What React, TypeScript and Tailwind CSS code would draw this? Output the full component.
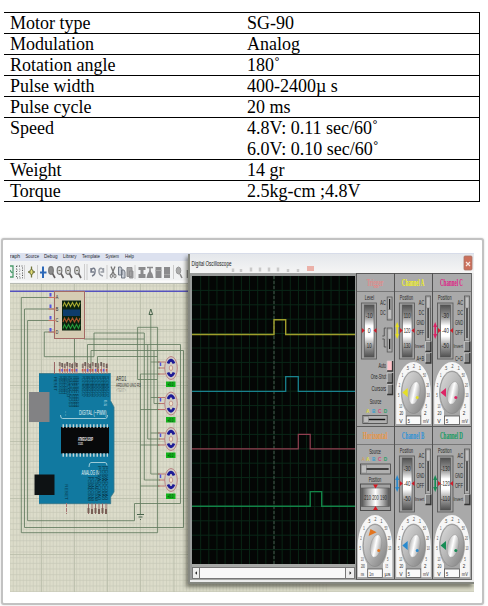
import React from "react";

const rows: [string, string[]][] = [
  ["Motor type", ["SG-90"]],
  ["Modulation", ["Analog"]],
  ["Rotation angle", ["180˚"]],
  ["Pulse width", ["400-2400µ s"]],
  ["Pulse cycle", ["20 ms"]],
  ["Speed", ["4.8V: 0.11 sec/60˚", "6.0V: 0.10 sec/60˚"]],
  ["Weight", ["14 gr"]],
  ["Torque", ["2.5kg-cm ;4.8V"]],
];

type TProps = {
  x: number;
  y: number;
  w: number;
  s?: number;
  fill?: string;
  anchor?: "start" | "middle" | "end";
  weight?: number;
  rotate?: number;
  className?: string;
  children: string;
};

/* Condensed label: glyphs are squeezed to the width w. */
function T({ x, y, w, s = 7, fill = "#262626", anchor = "start", weight = 400, rotate, className, children }: TProps) {
  return (
    <text
      x={x}
      y={y}
      fontSize={s}
      fill={fill}
      textAnchor={anchor}
      fontWeight={weight}
      textLength={w}
      lengthAdjust="spacingAndGlyphs"
      className={className}
      transform={rotate ? `rotate(${rotate} ${x} ${y})` : undefined}
    >
      {children}
    </text>
  );
}

function SpecTable() {
  return (
    <div className="ml-1 mt-3 w-[476px] border-r border-t border-black text-[18px] leading-[20px] text-black [font-family:'Liberation_Serif',serif]">
      {rows.map(([name, values]) => (
        <div key={name} className="flex border-b border-black pl-[6px]">
          <div className="w-[237px]">{name}</div>
          <div className={values.length > 1 ? "h-[41px] leading-[20.5px]" : "h-5"}>
            {values.map((v) => (
              <div key={v}>{v}</div>
            ))}
          </div>
        </div>
      ))}
    </div>
  );
}

function MenuBar() {
  const items: [string, number, number][] = [
    ["raph", 10, 10],
    ["Source", 25.5, 13.5],
    ["Debug", 44, 13.5],
    ["Library", 63, 13.5],
    ["Template", 82, 18],
    ["System", 105.5, 13.5],
    ["Help", 125, 9],
  ];
  return (
    <svg className="block h-2 w-full bg-[#dce1ef]" viewBox="10 253 464 8">
      {items.map(([t, x, w]) => (
        <T key={t} x={x} y={257.5} w={w} s={6} fill="#22252e">{t}</T>
      ))}
    </svg>
  );
}

function ToolBar() {
  const gray = "#8b8b8d";
  return (
    <svg className="block h-[23px] w-full bg-[#f1f2f3]" viewBox="10 261 464 23" fill="none">
      <path d="M10 281.500H474" stroke="#fbfbfb" strokeWidth="2" />
      <path d="M10 283.500H474" stroke="#b8bbb3" />
      <path d="M10 266h3v11h-3M10 270l2 3" stroke="#4c9a6c" strokeWidth="1.300" />
      <rect x="16.500" y="266" width="6" height="12" stroke="#555" strokeDasharray="1 1.500" />
      <path d="M19.500 266v12M17 270h6M17 274h6" stroke="#777" strokeWidth=".6" strokeDasharray="1 1.500" />
      <path d="M24.500 265v14M37.500 265v14M84.500 264v16M87 264v16M107 265v14M135 265v14M173.500 265v14" stroke="#ccc" />
      <path d="M31.500 266.500v11M28 272h7" stroke="#72753a" strokeWidth="1.300" />
      <ellipse cx="31.500" cy="272" rx="1.700" ry="2.600" fill="#e1dc75" stroke="#6d7036" />
      <path d="M43 266.500v11.500M40 272.500h6.500" stroke="#2c68b8" strokeWidth="2" />
      {[51, 59.5, 68, 77].map((x, i) => (
        <g key={x}>
          <ellipse cx={x} cy="270.500" rx="2.300" ry="3.800" stroke="#777" strokeWidth="1.200" fill={i === 0 ? "#8b8b8b" : "#d9d9d9"} />
          <path d={`M${x + 1.500} 273.500l2.500 4.500`} stroke="#646060" strokeWidth="1.600" />
          {i > 0 && <path d={`M${x - 1} 270.500h2`} stroke="#776" strokeWidth="1" />}
        </g>
      ))}
      <path d="M91 268v4h3M91 272c1-6 5-4 4 0q0 3-3 4" stroke="#777d8b" strokeWidth="1.400" />
      <path d="M103.500 268v4h-3M103.500 272c-1-6-5-4-4.500 0q0 3 4 4" stroke="#999da5" strokeWidth="1.400" />
      {/* cut, copy, paste */}
      <path d="M111 266.500l3.500 8.500M115 266.500l-3.500 8.500" stroke="#777" strokeWidth="1.300" />
      <ellipse cx="111.300" cy="276" rx="1.100" ry="1.800" stroke="#777" />
      <ellipse cx="114.900" cy="276" rx="1.100" ry="1.800" stroke="#777" />
      <path d="M118.500 267h2.500l1 2v6h-3.500zM121.500 270h2.500l1 2v6h-3.500z" fill="#c8cdd5" stroke="#69717c" strokeWidth=".9" />
      <path d="M127 267.500h5v9h-5zM129.500 271h3.500v7h-3.500z" fill="#a2a2a3" stroke={gray} strokeWidth=".9" />
      <path d="M138.500 267h7v3h-2v4h2v4h-7v-4h2v-4h-2z" fill={gray} />
      <path d="M147 267.500h6M150 268v6" stroke={gray} strokeWidth="1.500" />
      <path d="M146.500 278l1-4 2.500-4 2.500 4 1 4z" fill={gray} />
      <path d="M155.500 267h6v11h-6zM164 267h6v11h-6z" fill={gray} />
      <path d="M155.500 270.500h6M164 274.500h6" stroke="#a5a5a5" />
      <ellipse cx="178.500" cy="270.500" rx="2.300" ry="3.500" fill="#aaa" stroke="#999" />
      <path d="M180 274l2 4M187.500 270v8" stroke="#8b8b8b" strokeWidth="1.600" />
    </svg>
  );
}

function Motor({ y, from }: { y: number; from: number }) {
  return (
    <g>
      <path d={`M150.800 ${y - 6}h9M${from} ${y}H160M140.400 ${y + 6}h19`} stroke="#5f785c" strokeWidth=".8" />
      <path d={`M158 ${y - 6}h7M159 ${y}h7M158 ${y + 6}h7`} stroke="#b45b5b" strokeWidth=".8" />
      <path d={`M160.500 ${y - 5.5}v3.500`} stroke="#5351d8" strokeWidth="1.500" />
      <ellipse cx="171" cy={y} rx="6.300" ry="11.500" fill="#d0cdc4" stroke="#b8797c" strokeWidth=".9" />
      <path d={`M168 ${y - 4.500}q3-6.500 6 0M168 ${y + 4.500}q3 6.500 6 0`} stroke="#1d1a96" strokeWidth="2.800" fill="none" />
      <ellipse cx="171" cy={y} rx="1.700" ry="2.500" fill="#efe4cb" stroke="#ba817b" strokeWidth=".7" />
      <rect x="166" y={y + 13.500} width="9.500" height="5.5" fill="#12b31c" />
      <T x={167.500} y={y + 18} w={6} s={5} fill="#0f3a10">+0.0</T>
    </g>
  );
}

function Schematic() {
  const minorV = Array.from({ length: 96 }, (_, i) => 10 + i * 3.330);
  const minorH = Array.from({ length: 57 }, (_, i) => 286 + i * 5.660);
  const pinsTop = [60, 62.500, 65, 67.500, 70, 72.500, 75, 77, 83, 85.500, 88, 90.500, 93, 96, 98.500, 101.500, 104, 107];
  const pinsBottom = [88.500, 92, 95.500, 99, 102.500, 106];
  return (
    <svg className="block h-[308px] w-full bg-[#dcdcca]" viewBox="10 284 464 308" fill="none">
      <path d={minorV.map((x) => `M${x} 284V592`).join("")} stroke="#c9cbb9" strokeWidth=".65" />
      <path d={minorH.map((y) => `M10 ${y}H474`).join("")} stroke="#c7c9b8" strokeWidth=".7" />
      <path d="M41.500 284V592M74.500 284V592M107.500 284V592M140.500 284V592M174 284V592M10 329.500H474M10 385.500H474M10 441.500H474M10 498.500H474M10 554.500H474" stroke="#b9bcaa" strokeWidth=".8" />
      <path d="M10 291.300H190" stroke="#5552be" strokeWidth="1.500" />

      <g stroke="#627b5f" strokeWidth=".85">
        <path d="M54 297.500H21.300V532.700H157.600V379.500H137.600V327.300H157.600V379.500" />
        <path d="M54 309H24.500V527.500H183.500V350.500H91V372" />
        <path d="M54 320.500H27.600V520.700H134.500V503.500H180.500V344.500H87.500V372" />
        <path d="M54 332H44.300V356.700H94V333H144.300V480" />
        <path d="M84 339H144M74.500 339V372M97.500 372V356.500H157.500M150.800 315V474M140.400 515V374M147.700 344.500V439M154 350.500V403.500" />
      </g>
      <path d="M150.800 309l-1.800 5.500h3.600zM137 514.500h7M138.500 517h4M140 519.500h1" stroke="#47634a" />

      <rect x="54.500" y="291.500" width="30" height="47" fill="#d5ccb3" stroke="#a46965" />
      <path d="M48.500 297.500h7M48.500 309h7M48.500 320.500h7M48.500 332h7" stroke="#c67066" />
      {[293, 304.500, 316, 328].map((y, i) => (
        <g key={y}>
          <rect x="49.500" y={y} width="2" height="3.500" fill="#5553e0" />
          <T x={55.800} y={y + 6} w={2.600} s={5}>{"ABCD"[i]}</T>
        </g>
      ))}
      <rect x="62" y="300.500" width="19" height="30" fill="#0b2310" />
      <rect x="63" y="309.500" width="17" height="6.500" fill="#0d3c6c" />
      {[[306.500, "#a9aa31"], [322, "#a8542b"], [328.500, "#259a3a"]].map(([y, c]) => (
        <path key={c} d={`M63 ${y}l1.500-4 2 4 2-4 2 4 2-4 2 4 2-4 2 4 1.500-4`} stroke={c as string} strokeWidth="1.100" />
      ))}

      <path d="M39 373.500H110.700V401l3.300 6V492l-3.300 5v6.700H39z" fill="#1179a0" />
      <path d="M39 373.500H110.700M110.700 401l3.300 6V492l-3.300 5v6.700H39" stroke="#387585" strokeWidth=".8" />
      <rect x="29" y="392" width="20.500" height="30" fill="#828284" />
      <rect x="34.500" y="474.500" width="20" height="20.500" fill="#0e1214" />
      <path d="M54.500 362v12" stroke="#9b6565" />
      <path d={pinsTop.map((x) => `M${x} 363V374`).join("")} stroke="#a87272" strokeWidth=".8" />
      {pinsTop.map((x, i) => (
        <g key={x}>
          <rect x={x - 1.200} y={362 + (i % 3)} width="1.800" height="4" fill={i % 2 ? "#6f5f59" : "#8a7a70"} />
          <rect x={x - 1.200} y="369" width="1.500" height="2.500" fill={i % 3 === 1 ? "#6156d6" : "#c4594c"} />
          <T x={x - 1} y={376} w={i > 3 && i < 8 ? 31 : i < 3 ? 18 : 21} s={3.600} fill="#06303f" rotate={90}>{i < 8 ? "PB5/SCK/D13" : "PD7/AIN1/D7"}</T>
        </g>
      ))}
      <T x={53.500} y={377} w={14} s={4} fill="#06303f" rotate={90}>RESET</T>
      <path d="M60.500 415q0 3.500 2 3.500H105.500q2 0 2-3.500M89 467q0-4.500 2-4.500H105q2 0 2 3" stroke="#c2dfe4" strokeWidth=".8" />
      <T x={79} y={415} w={27.500} s={7} fill="#eaf6f8">DIGITAL (~PWM)</T>
      <T x={67} y={416} w={5} s={4} fill="#d9edf0" rotate={-90}>~ ~</T>
      <T x={107} y={406} w={6} s={4} fill="#d9edf0" rotate={-90}>TX RX</T>
      <rect x="61" y="427" width="48" height="26.500" fill="#08090a" />
      <path d="M62.500 426H108M62.500 455H108" stroke="#c2d6d7" strokeWidth="3.500" strokeDasharray="1.500 1.900" />
      <T x={78} y={440.500} w={15} s={5} fill="#f2f2f2" weight={700}>ATMEGA328P</T>
      <T x={78} y={445} w={5} s={4} fill="#f2f2f2" weight={700}>1121</T>
      <T x={81.500} y={474.500} w={17.500} s={7} fill="#eef8f9">ANALOG IN</T>
      <T x={65} y={484} w={16} s={4} fill="#06303f" rotate={90}>RESET</T>
      <path d="M66.500 503v11" stroke="#a67372" strokeDasharray="4 1" />
      {pinsBottom.map((x, i) => (
        <g key={x}>
          <path d={`M${x} 503.500V514`} stroke="#936666" />
          <rect x={x - 1} y={508 + (i % 2)} width="2" height="5" fill="#795e55" />
          <T x={x - 1} y={466 + (i < 3 ? 11 : 0)} w={i < 3 ? 24 : 34} s={3.600} fill="#06303f" rotate={90}>PC0/ADC0/A0</T>
        </g>
      ))}
      <T x={116} y={381} w={10.500} s={7} fill="#2c2e29">ARD1</T>
      <T x={116} y={387} w={24.500} s={5.500} fill="#2f2f2a">ARDUINO UNO R3</T>
      <T x={116} y={392} w={10} s={4.500} fill="#9b9b8e">&lt;TEXT&gt;</T>
      <Motor y={368} from={157.6} />
      <Motor y={403.5} from={154} />
      <Motor y={439} from={147.7} />
      <Motor y={480} from={144.3} />
    </svg>
  );
}

function ScopeScreen() {
  const v = Array.from({ length: 19 }, (_, i) => 192.500 + (i + 1) * 8.150);
  const h = Array.from({ length: 19 }, (_, i) => 276 + (i + 1) * 14.400);
  return (
    <svg className="block h-[288px] w-[163px] bg-[#040605]" viewBox="192 276 163 288" fill="none">
      <path d={v.map((x) => `M${x} 276V564`).join("")} stroke="#0a2615" />
      <path d={h.map((y) => `M192 ${y}H355`).join("")} stroke="#0a2718" />
      <path d="M274 276V564" stroke="#46544d" strokeDasharray="3 2" />
      <path d="M192 334.500H274V319.700H285.700V334.500H355" stroke="#a09e2b" strokeWidth="1.400" />
      <path d="M192 391.400H285.700V376.700H298.300V391.400H355" stroke="#19818d" strokeWidth="1.300" />
      <path d="M192 448.800H298.300V434.400H310.200V448.800H355" stroke="#913f50" strokeWidth="1.200" />
      <path d="M192 506.300H310.200V491.600H321.700V506.300H355" stroke="#128246" strokeWidth="1.400" />
    </svg>
  );
}

/* Vertical selector; its light knob sits at the top, or at the bottom when low. */
function VSlider({ x, y, h, low }: { x: number; y: number; h: number; low?: boolean }) {
  const k = Math.min(11, h / 2 - 2);
  return (
    <g>
      <rect x={x} y={y} width="5" height={h} fill="#adadad" stroke="#555" strokeWidth=".8" />
      <path d={`M${x + 2.500} ${y + 2}V${y + h - 3}`} stroke="#1c1c1c" strokeWidth="1.200" />
      <rect x={x + 0.700} y={low ? y + h - k - 1 : y + 1} width="3.800" height={k} fill="#c0c0c0" stroke="#777" strokeWidth=".5" />
    </g>
  );
}

function HSlider({ x, y, w, h = 8 }: { x: number; y: number; w: number; h?: number }) {
  return (
    <g>
      <rect x={x} y={y} width={w} height={h} fill="#b0b0b0" stroke="#444" strokeWidth=".8" />
      <path d={`M${x + 2} ${y + h / 2}H${x + w - 2}`} stroke="#101010" strokeWidth="1.400" />
      <rect x={x + 1} y={y + 1} width="5" height={h - 2} fill="#bdbdbd" stroke="#777" strokeWidth=".5" />
    </g>
  );
}

function Button({ x, y, fill = "#858585" }: { x: number; y: number; fill?: string }) {
  return (
    <g>
      <rect x={x} y={y} width="5.500" height="10" fill={fill} />
      <path d={`M${x} ${y + 10}V${y}H${x + 5.500}`} stroke="#d8d8d8" strokeWidth=".7" fill="none" />
      <path d={`M${x} ${y + 10}H${x + 5.500}V${y}`} stroke="#333" strokeWidth="1.400" fill="none" />
    </g>
  );
}

function Wheel({ x, values }: { x: number; values: string[] }) {
  return (
    <g>
      <rect x={x} y="11" width="15.500" height="56" fill="#a2a2a2" stroke="#5b5b5b" strokeWidth=".9" />
      <rect x={x + 3} y="13" width="10" height="52" fill="url(#wheel)" stroke="#555" strokeWidth=".7" />
      {values.map((t, i) => (
        <T key={i} x={x + 8} y={26 + i * 14.800} w={t.length * 2 + 1} s={6.5} anchor="middle">{t}</T>
      ))}
      <path d={`M${x + 0.500} 36l3 2.500-3 2.500zM${x + 15.500} 36l-3 2.500 3 2.500z`} fill="#d11d2b" />
    </g>
  );
}

function Dial({ cx, color, angle = 0, left, right, digit }: { cx: number; color: string; angle?: number; left: string[]; right: string[]; digit: string }) {
  const ticks = ["10", "5", "2", "1", ".5", ".2", ".1", "50", "20", "10", "5"];
  const px = cx - 8.500 * Math.cos(angle);
  const py = 100.500 - 15 * Math.sin(angle);
  return (
    <g>
      <path d={`M${cx - 17.8} 132V101a17.800 31 0 1 1 35.600 0V132h-10V118h-15.600v14z`} fill="#f6f6f6" />
      <ellipse cx={cx} cy="101" rx="13" ry="22.5" fill="#b2b2b2" />
      <path d={`M${cx - 8} 116h16v8h-16z`} fill="#a6a6a6" />
      {ticks.map((t, i) => {
        const a = Math.PI * (-0.170 + (i * 1.340) / 10);
        return (
          <T key={i} x={cx - 15.200 * Math.cos(a)} y={102.500 - 26.300 * Math.sin(a)} w={t.length * 1.500} s={4.600} fill="#444" anchor="middle">{t}</T>
        );
      })}
      <ellipse cx={cx} cy="100.500" rx="12" ry="21" fill="url(#knob)" stroke="#858585" strokeWidth=".6" />
      <g transform={`rotate(12 ${cx + 1} 101)`}>
        <ellipse cx={cx + 1} cy="101" rx="5.600" ry="11.500" fill="url(#shine)" stroke="#8d8d8d" strokeWidth=".4" />
      </g>
      <path d="M-3 0L2.500 -4.500V4.500z" fill={color} transform={`translate(${px} ${py}) rotate(${(angle * 180) / Math.PI})`} />
      <circle cx={cx + 3.800} cy="105.500" r="1.500" fill={color} />
      <T x={cx - 12.500} y={123} w={4} s={6} anchor="middle">{left[0]}</T>
      <T x={cx - 13} y={131} w={3.500} s={6} anchor="middle">{left[1]}</T>
      <T x={cx + 12} y={123} w={2.500} s={6} anchor="middle">{right[0]}</T>
      <T x={cx + 12.800} y={131} w={6} s={6} anchor="middle">{right[1]}</T>
      <rect x={cx - 7.500} y="124" width="15" height="8.500" fill="#fafafa" stroke="#555" strokeWidth=".8" />
      <T x={cx - 6} y={131} w={digit.length * 2.200} s={6}>{digit}</T>
    </g>
  );
}

const bodyClass = "block h-[134px] w-full";

function ChannelBody({ color, values, sum }: { color: string; values: string[]; sum?: string }) {
  return (
    <svg className={bodyClass} viewBox="0 0 38 134" preserveAspectRatio="none">
      <T x={5} y={8.300} w={13.500} s={6.500}>Position</T>
      <Wheel x={4.5} values={values} />
      <path d="M2.200 30l2 5h-1.200v7h1.200l-2 5-2-5h1.200v-7h-1.200z" fill={color} />
      {["AC", "DC", "GND", "OFF"].map((t, i) => (
        <T key={t} x={30} y={13 + i * 10} w={i < 2 ? 5.500 : 8} s={6.500} anchor="end">{t}</T>
      ))}
      <VSlider x={31.500} y={4} h={45} />
      <T x={30} y={56} w={9.500} s={6} anchor="end">Invert</T>
      <Button x={31.300} y={49.500} />
      {sum && <T x={30} y={69} w={8} s={6.500} anchor="end">{sum}</T>}
      {sum && <Button x={31.300} y={61} />}
      <Dial cx={19} color={color} left={["20", "V"]} right={["2", "mV"]} digit="5" />
    </svg>
  );
}

function SourceLetters({ y }: { y: number }) {
  return (
    <g>
      {[["A", "#e0dc3a"], ["B", "#35a0cf"], ["C", "#d9487f"], ["D", "#2b9d68"]].map(([t, c], i) => (
        <T key={t} x={9.500 + i * 6} y={y} w={3.500} s={6} fill={c} weight={700}>{t}</T>
      ))}
    </g>
  );
}

function TriggerBody() {
  return (
    <svg className={bodyClass} viewBox="0 0 38 134" preserveAspectRatio="none">
      <T x={8} y={8.300} w={9.500} s={6.500}>Level</T>
      <Wheel x={4.5} values={["-10", "0", "10"]} />
      <T x={29.500} y={13} w={5.500} s={6.500} anchor="end">AC</T>
      <T x={29.500} y={23} w={5.500} s={6.500} anchor="end">DC</T>
      <VSlider x={31} y={5} h={23} low />
      <path d="M26 44h2v-8h2M26 47h2v8h2" stroke="#444" strokeWidth=".8" fill="none" />
      <VSlider x={31} y={36} h={24} />
      <T x={30} y={76.500} w={8} s={6.500} anchor="end">Auto</T>
      <T x={30} y={87.500} w={16} s={6.500} anchor="end">One-Shot</T>
      <T x={30} y={99} w={15} s={6.500} anchor="end">Cursors</T>
      <Button x={31} y={69} fill="#ffc4ca" />
      <Button x={31} y={81} />
      <Button x={31} y={92.500} />
      <T x={13} y={112.500} w={12} s={6.500}>Source</T>
      <SourceLetters y={121} />
      <HSlider x={6} y={123.500} w={25} />
    </svg>
  );
}

function HorizontalBody() {
  return (
    <svg className={bodyClass} viewBox="0 0 38 134" preserveAspectRatio="none">
      <T x={12.500} y={9.300} w={12} s={6.500}>Source</T>
      <T x={5} y={16.500} w={3} s={6} fill="#d99955">A</T>
      <SourceLetters y={16.500} />
      <HSlider x={3.500} y={19} w={31} h={10} />
      <T x={12} y={37} w={13} s={6.500}>Position</T>
      <rect x="3.500" y="39" width="31" height="26.500" fill="#a2a2a2" stroke="#444" strokeWidth=".9" />
      <rect x="4.500" y="43" width="29" height="18.500" fill="url(#wheelH)" stroke="#555" strokeWidth=".6" />
      <T x={7.500} y={55.500} w={23} s={7}>210 200 190</T>
      <path d="M16.500 39.500h5l-2.500 4zM16.500 65h5l-2.500-4z" fill="#d51a24" />
      <Dial cx={18.5} color="#e2741f" angle={1.150} left={["200", "ms"]} right={["0.5", "µs"]} digit="1m" />
    </svg>
  );
}

function Panel({ title, color, width, children }: { title: string; color: string; width: number; children: React.ReactNode }) {
  return (
    <div className="flex flex-col border-l border-[#515151] bg-[#a9a9a9]">
      <svg className="block h-[19px] w-full border-b border-[#777] bg-[#aaaaab]" viewBox="0 0 38 19" preserveAspectRatio="none">
        <path d="M0 .5H38" stroke="#555" />
        <T x={18.5} y={13.500} w={width} s={10} fill={color} anchor="middle" weight={700} className="[font-family:'Liberation_Serif',serif]">{title}</T>
      </svg>
      {children}
    </div>
  );
}

function Gradients() {
  return (
    <svg className="absolute h-0 w-0">
      <defs>
        <linearGradient id="wheel" x1="0" y1="0" x2="0" y2="1">
          <stop offset="0" stopColor="#505050" />
          <stop offset=".25" stopColor="#a0a0a0" />
          <stop offset=".4" stopColor="#fff" />
          <stop offset=".6" stopColor="#fff" />
          <stop offset=".78" stopColor="#a0a0a0" />
          <stop offset="1" stopColor="#505050" />
        </linearGradient>
        <linearGradient id="wheelH">
          <stop offset="0" stopColor="#505050" />
          <stop offset=".25" stopColor="#b0b0b0" />
          <stop offset=".5" stopColor="#fff" />
          <stop offset=".75" stopColor="#b0b0b0" />
          <stop offset="1" stopColor="#505050" />
        </linearGradient>
        <linearGradient id="knob" x1="0" y1="0" x2="1" y2="1">
          <stop offset="0" stopColor="#dedede" />
          <stop offset=".5" stopColor="#b4b4b4" />
          <stop offset="1" stopColor="#7d7d7d" />
        </linearGradient>
        <linearGradient id="shine">
          <stop offset="0" stopColor="#b4b4b4" />
          <stop offset=".45" stopColor="#fff" />
          <stop offset="1" stopColor="#a5a5a5" />
        </linearGradient>
      </defs>
    </svg>
  );
}

function Oscilloscope() {
  return (
    <div className="absolute left-[178px] top-px flex h-[330px] w-[286px] flex-col border-b-2 border-l-2 border-[#85877f] bg-[#ececec] shadow-[-2px_3px_4px_rgba(40,40,30,0.55)]">
      <svg className="block h-[19px] w-full bg-linear-to-b from-[#e4e7eb] to-[#f5f5f5]" viewBox="190 254 284 19">
        <T x={191.500} y={265.500} w={40} s={8} fill="#202020">Digital Oscilloscope</T>
        <path d="M233 268.500v3.500M241 269v3M251 267.500v4M260 267.500v4M269 267.500v4M278 267.500v4M288 269v3M298 269v3" stroke="#c9c9c9" strokeWidth="2.500" />
        <rect x="307" y="266" width="7" height="5" fill="#ebb1a9" />
        <rect x="464" y="256" width="8" height="14" rx="1" fill="#cb705c" stroke="#a87468" strokeWidth=".8" />
        <path d="M466 262l4 4M470 262l-4 4" stroke="#f5e6e0" strokeWidth="1.200" />
      </svg>
      <div className="flex">
        <div className="w-[166px] border-l-2 border-r border-t-[3px] border-[#999b9a] bg-[#a5a7a5]">
          <ScopeScreen />
          <div className="mt-[3px] flex h-3 w-[163px] items-center justify-between border border-[#777] bg-[#f8f8f8]">
            <svg className="h-[10px] w-[7px] border-r border-[#777] bg-[#eee]" viewBox="0 0 7 10"><path d="M4.500 3v4l-2-2z" fill="#111" /></svg>
            <svg className="h-[10px] w-[9px] border-l border-[#777] bg-[#eee]" viewBox="0 0 9 10"><path d="M4 3v4l2-2z" fill="#111" /></svg>
          </div>
        </div>
        <div className="grid w-[116px] grid-cols-[38px_38px_39px] border-b border-r border-[#666] bg-[#a9a9a9]">
          <Panel title="Trigger" color="#e28a8a" width={17}><TriggerBody /></Panel>
          <Panel title="Channel A" color="#f2f21a" width={23}><ChannelBody color="#e5df25" values={["110", "120", "130"]} sum="A+B" /></Panel>
          <Panel title="Channel C" color="#df1f86" width={23}><ChannelBody color="#dc2465" values={["-30", "-40", "-50"]} sum="C+D" /></Panel>
          <Panel title="Horizontal" color="#ec9540" width={25}><HorizontalBody /></Panel>
          <Panel title="Channel B" color="#2c91d8" width={23}><ChannelBody color="#2b8ace" values={["-30", "-40", "-50"]} /></Panel>
          <Panel title="Channel D" color="#129a5d" width={23}><ChannelBody color="#178c55" values={["-130", "-120", "-110"]} /></Panel>
        </div>
      </div>
    </div>
  );
}

export default function App() {
  return (
    <main className="flex h-[606px] w-[488px] flex-col overflow-hidden bg-white">
      <div className="h-[238px] shrink-0">
        <SpecTable />
      </div>
      <section className="ml-px h-[367px] w-[483px] shrink-0 rounded-[3px] border-2 border-[#c2c2c2] bg-white pl-[7px] pt-[13px] shadow-[0_0_2px_#ccc]">
        <div className="relative h-[339px] w-[464px] overflow-hidden [font-family:'Liberation_Sans',sans-serif]">
          <Gradients />
          <MenuBar />
          <ToolBar />
          <Schematic />
          <Oscilloscope />
        </div>
      </section>
    </main>
  );
}
